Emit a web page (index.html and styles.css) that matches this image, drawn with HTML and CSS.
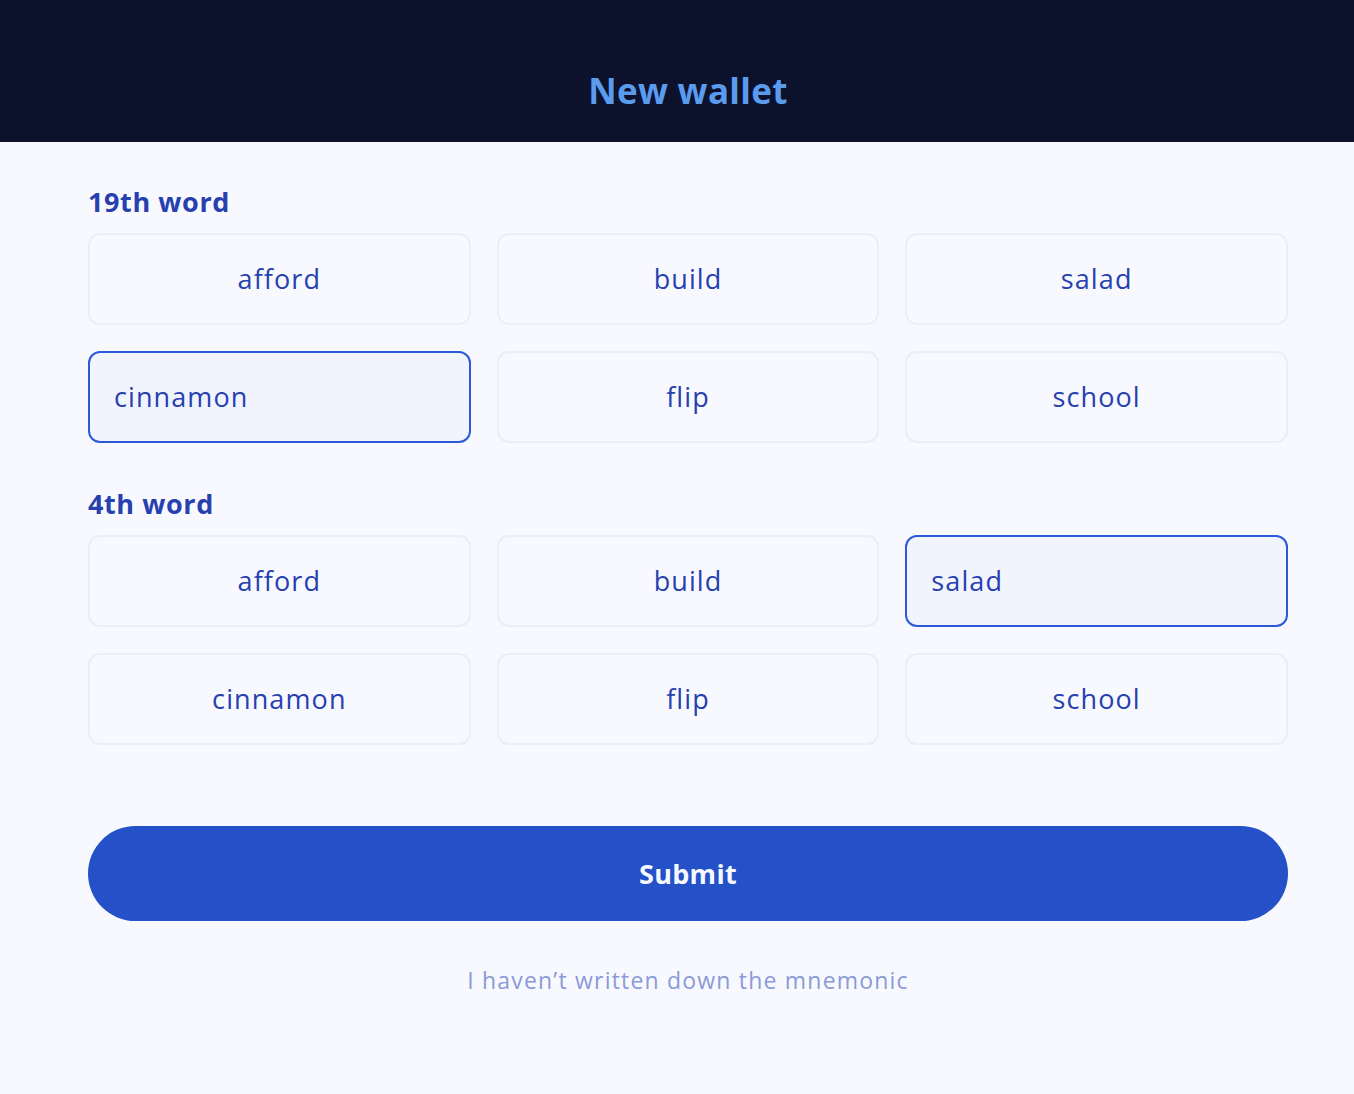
FILE: index.html
```html
<!DOCTYPE html>
<html lang="en">
<head>
<meta charset="utf-8">
<title>New wallet</title>
<link rel="stylesheet" href="styles.css">
</head>
<body>
<header class="topbar">
  <h1 class="title">New wallet</h1>
</header>
<main class="content">
  <section class="group">
    <h2 class="label">19th word</h2>
    <div class="grid">
      <button class="word">afford</button>
      <button class="word">build</button>
      <button class="word">salad</button>
      <button class="word selected">cinnamon</button>
      <button class="word">flip</button>
      <button class="word">school</button>
    </div>
  </section>
  <section class="group group-second">
    <h2 class="label">4th word</h2>
    <div class="grid">
      <button class="word">afford</button>
      <button class="word">build</button>
      <button class="word selected">salad</button>
      <button class="word">cinnamon</button>
      <button class="word">flip</button>
      <button class="word">school</button>
    </div>
  </section>
  <button class="submit">Submit</button>
  <a class="skip" href="#">I haven’t written down the mnemonic</a>
</main>
</body>
</html>
```
FILE: styles.css
```css
* { box-sizing: border-box; }
html, body { margin: 0; padding: 0; }
body {
  background: #f8f9fe;
  font-family: "Open Sans", "DejaVu Sans", sans-serif;
  color: #2740b0;
  min-height: 1094px;
}
.topbar {
  background: #0c122c;
  height: 142px;
  display: flex;
  align-items: flex-end;
  justify-content: center;
  padding-bottom: 29px;
  padding-left: 22px;
}
.title {
  margin: 0;
  font-size: 35px;
  line-height: 44px;
  font-weight: 700;
  letter-spacing: 0.3px;
  color: #5a9bee;
}
.content {
  width: 1200px;
  margin: 0 0 0 88px;
  padding-top: 44px;
  display: flex;
  flex-direction: column;
}
.group-second { margin-top: 45px; }
.label {
  margin: 0 0 15px;
  font-size: 27px;
  line-height: 32px;
  font-weight: 700;
  letter-spacing: 0.6px;
  color: #2740b0;
}
.grid {
  display: grid;
  grid-template-columns: repeat(3, 1fr);
  gap: 26px;
}
.word {
  height: 92px;
  border: 2px solid #eceef5;
  border-radius: 12px;
  background: #f8f9fe;
  font-family: inherit;
  font-size: 27px;
  letter-spacing: 1.1px;
  color: #2740b0;
  text-align: center;
  padding: 0 24px 2px;
  margin: 0;
}
.word.selected {
  background: #f1f4fc;
  border-color: #2c59d9;
  text-align: left;
}
.submit {
  margin-top: 81px;
  height: 95px;
  border: 0;
  border-radius: 48px;
  background: #2450c8;
  color: #f6f8ff;
  font-family: inherit;
  font-size: 27px;
  font-weight: 700;
  letter-spacing: 0.3px;
}
.skip {
  margin-top: 45px;
  align-self: center;
  font-size: 23px;
  line-height: 28px;
  letter-spacing: 1.2px;
  color: #8b9ad8;
  text-decoration: none;
}
```
